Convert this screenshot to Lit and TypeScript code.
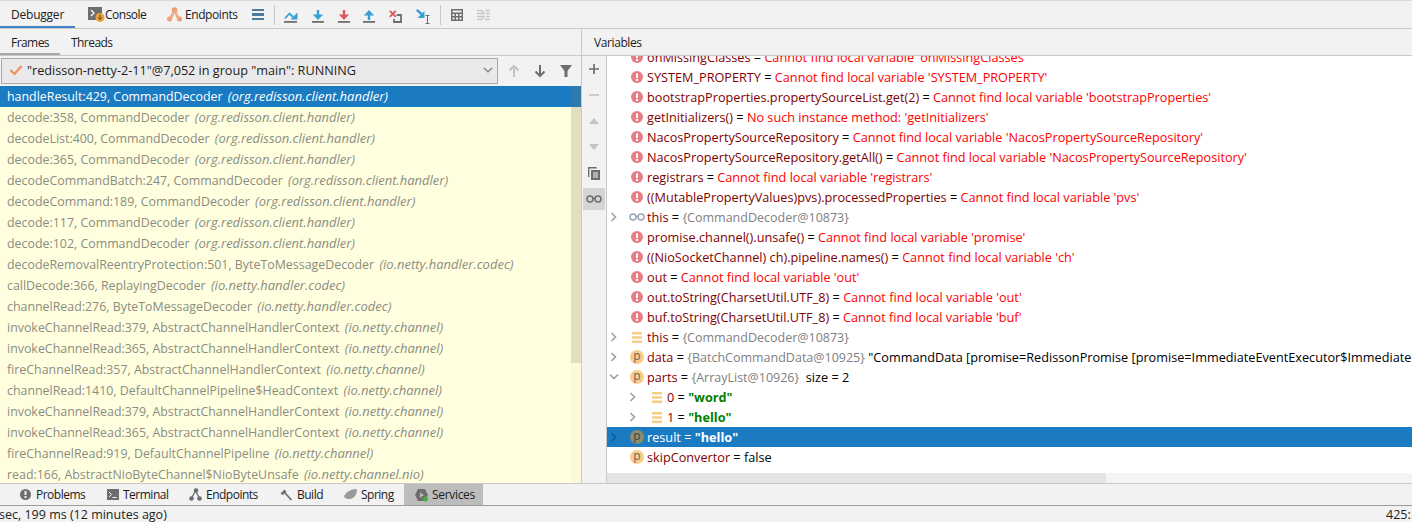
import { LitElement, html, css, svg } from "lit";
import { customElement } from "lit/decorators.js";

const frames: [string, string][] = [
  ["handleResult:429, CommandDecoder", "(org.redisson.client.handler)"],
  ["decode:358, CommandDecoder", "(org.redisson.client.handler)"],
  ["decodeList:400, CommandDecoder", "(org.redisson.client.handler)"],
  ["decode:365, CommandDecoder", "(org.redisson.client.handler)"],
  ["decodeCommandBatch:247, CommandDecoder", "(org.redisson.client.handler)"],
  ["decodeCommand:189, CommandDecoder", "(org.redisson.client.handler)"],
  ["decode:117, CommandDecoder", "(org.redisson.client.handler)"],
  ["decode:102, CommandDecoder", "(org.redisson.client.handler)"],
  ["decodeRemovalReentryProtection:501, ByteToMessageDecoder", "(io.netty.handler.codec)"],
  ["callDecode:366, ReplayingDecoder", "(io.netty.handler.codec)"],
  ["channelRead:276, ByteToMessageDecoder", "(io.netty.handler.codec)"],
  ["invokeChannelRead:379, AbstractChannelHandlerContext", "(io.netty.channel)"],
  ["invokeChannelRead:365, AbstractChannelHandlerContext", "(io.netty.channel)"],
  ["fireChannelRead:357, AbstractChannelHandlerContext", "(io.netty.channel)"],
  ["channelRead:1410, DefaultChannelPipeline$HeadContext", "(io.netty.channel)"],
  ["invokeChannelRead:379, AbstractChannelHandlerContext", "(io.netty.channel)"],
  ["invokeChannelRead:365, AbstractChannelHandlerContext", "(io.netty.channel)"],
  ["fireChannelRead:919, DefaultChannelPipeline", "(io.netty.channel)"],
  ["read:166, AbstractNioByteChannel$NioByteUnsafe", "(io.netty.channel.nio)"],
];

const errors: [string, string][] = [
  ["onMissingClasses", "Cannot find local variable 'onMissingClasses'"],
  ["SYSTEM_PROPERTY", "Cannot find local variable 'SYSTEM_PROPERTY'"],
  ["bootstrapProperties.propertySourceList.get(2)", "Cannot find local variable 'bootstrapProperties'"],
  ["getInitializers()", "No such instance method: 'getInitializers'"],
  ["NacosPropertySourceRepository", "Cannot find local variable 'NacosPropertySourceRepository'"],
  ["NacosPropertySourceRepository.getAll()", "Cannot find local variable 'NacosPropertySourceRepository'"],
  ["registrars", "Cannot find local variable 'registrars'"],
  ["((MutablePropertyValues)pvs).processedProperties", "Cannot find local variable 'pvs'"],
];
const errors2: [string, string][] = [
  ["promise.channel().unsafe()", "Cannot find local variable 'promise'"],
  ["((NioSocketChannel) ch).pipeline.names()", "Cannot find local variable 'ch'"],
  ["out", "Cannot find local variable 'out'"],
  ["out.toString(CharsetUtil.UTF_8)", "Cannot find local variable 'out'"],
  ["buf.toString(CharsetUtil.UTF_8)", "Cannot find local variable 'buf'"],
];

const ico = (w: number, h: number, body: unknown) =>
  html`<svg width=${w} height=${h} viewBox="0 0 ${w} ${h}" class="ico">${body}</svg>`;

const errIcon = ico(12, 12, svg`<circle cx="6" cy="6" r="6" fill="#e57f85"/><rect x="5" y="2.500" width="2" height="4.500" fill="#fff"/><rect x="5" y="8" width="2" height="2" fill="#fff"/>`);
const pIcon = (sel = false) => html`<span class="p ${sel ? "psel" : ""}">p</span>`;
const barsIcon = ico(10, 11, svg`<path d="M0 1.300h10M0 5.500h10M0 9.700h10" stroke="#f8cd85" stroke-width="2.600"/>`);
const glasses = (c: string) => ico(16, 12, svg`<circle cx="4" cy="6" r="3" fill="none" stroke="${c}" stroke-width="1.500"/><circle cx="12" cy="6" r="3" fill="none" stroke="${c}" stroke-width="1.500"/><path d="M7 5.500h2" stroke="${c}" stroke-width="1.300"/>`);
const chevR = (c = "#a0a0a0") => ico(8, 10, svg`<path d="M1.500 1l4 4-4 4" fill="none" stroke="${c}" stroke-width="1.600"/>`);
const chevD = ico(10, 8, svg`<path d="M1 1.500l4 4 4-4" fill="none" stroke="#a0a0a0" stroke-width="1.600"/>`);

const arrowBlue = "#389fd6";
const red = "#db5860";
const bar = svg`<rect x="0" y="11" width="12" height="1.800" fill="#6e6e6e"/>`;
const tools = {
  stepOver: ico(14, 13, svg`<path d="M.8 8.500L5.500 3.500L9 7" fill="none" stroke="${arrowBlue}" stroke-width="1.800"/><path d="M13.500 2.500V9.500H6.500z" fill="${arrowBlue}"/><rect x="0" y="11" width="13" height="1.800" fill="#6e6e6e"/>`),
  into: ico(12, 13, svg`<path d="M6 0v6" stroke="${arrowBlue}" stroke-width="2.400"/><path d="M.8 4.500h10.400L6 10z" fill="${arrowBlue}"/>${bar}`),
  force: ico(12, 13, svg`<path d="M6 0v6" stroke="${red}" stroke-width="2.400"/><path d="M.8 4.500h10.400L6 10z" fill="${red}"/>${bar}`),
  out: ico(12, 13, svg`<path d="M.8 5.500h10.400L6 0z" fill="${arrowBlue}"/><path d="M6 4v6" stroke="${arrowBlue}" stroke-width="2.400"/>${bar}`),
  drop: ico(13, 13, svg`<path d="M.8.800l6 6M6.800.800l-6 6" stroke="${red}" stroke-width="1.900"/><path d="M7.500 5h4.500v7H5V9" fill="none" stroke="#6e6e6e" stroke-width="1.800"/>`),
  cursor: ico(15, 15, svg`<path d="M.8.800L6 5.500" stroke="${arrowBlue}" stroke-width="2.400"/><path d="M8.500 2v7H1.500z" fill="${arrowBlue}"/><path d="M9.500 6.500h4M9.500 14.500h4M11.500 6.500v8" stroke="#6e6e6e" stroke-width="1"/>`),
  calc: ico(12, 12, svg`<path d="M0 0h12v12H0z" fill="#6e6e6e"/><path d="M1.500 1.500h9v2h-9zM1.500 5h2v2h-2zM5 5h2v2H5zM8.500 5h2v2h-2zM1.500 8.500h2v2h-2zM5 8.500h2v2H5zM8.500 8.500h2v2h-2z" fill="#f2f2f2"/>`),
  trace: ico(13, 12, svg`<path d="M0 1.500h5l2 3h-7M0 7.500h7l-2 3H0M13 1.500H8M13 4.500H9M13 7.500H9M13 10.500H8" fill="none" stroke="#c8c8c8" stroke-width="1.400"/>`),
};

@customElement("app-root")
export class AppRoot extends LitElement {
  static styles = css`
    :host { display: flex; flex-direction: column; width: 1412px; height: 522px; overflow: hidden; background: #f2f2f2;
      font: 12px "Open Sans", sans-serif; color: #1c1c1c; }
    .ico { display: block; flex: none; }
    .top { flex: none; border-top: 1px solid #d9d9d9; border-bottom: 1px solid #c9c9c9; box-sizing: border-box; height: 29px; display: flex; align-items: center; letter-spacing: -0.22px; }
    .tab { height: 100%; display: flex; align-items: center; gap: 1px; flex: none; }
    .tab.dbg { width: 75px; padding-left: 11px; box-sizing: border-box; box-shadow: inset 0 -2px 0 #4083c9; }
    .tab.con { margin-left: 13px; width: 79px; letter-spacing: -0.5px; gap: 0; }
    .tab.end { width: 85px; gap: 3px; letter-spacing: -0.42px; }
    .hb { display: flex; flex-direction: column; gap: 2px; width: 12px; }
    .hb i { height: 2.500px; background: #4c7c9c; display: block; }
    .sep { width: 1px; height: 20px; background: #c9c9c9; margin: 0 9.500px; flex: none; }
    .tools { display: flex; align-items: center; gap: 14px; }
    .tools.a { gap: 13.800px; padding-top: 3px; }
    .main { flex: 1; display: flex; min-height: 0; }
    .left { width: 581px; flex: none; display: flex; flex-direction: column; border-right: 1px solid #c9c9c9; }
    .subtabs { height: 27px; flex: none; display: flex; border-bottom: 1px solid #c9c9c9; box-sizing: border-box; align-items: center; letter-spacing: -0.55px; }
    .sub { height: 100%; display: flex; align-items: center; box-sizing: border-box; }
    .sub.on { width: 60px; padding-left: 11px; box-shadow: inset 0 -2px 0 #a8a8a8; }
    .sub.off { padding-left: 11px; }
    .combo-row { height: 30px; flex: none; display: flex; align-items: center; padding: 0 0 0 1px; }
    .combo { width: 497px; height: 26px; box-sizing: border-box; border: 1px solid #a9a9a9; background: #e9e9e9; display: flex; align-items: center; padding: 0 4px 2px 7px; gap: 3px; flex: none; font-size: 12.700px; }
    .combo .t { flex: 1; white-space: nowrap; padding-left: 1px; letter-spacing: -0.02px; }
    .nav { display: flex; align-items: center; padding-left: 9px; gap: 12px; }
    .list { position: relative; flex: 1; background: #ffffe0; overflow: hidden; min-height: 0; }
    .fr { height: 21px; line-height: 21px; padding-left: 7px; white-space: nowrap; color: #8c8c80; font-size: 12.400px; }
    .fr i { font-style: italic; margin-left: 2px; font-size: 13px; }
    .fr.sel { background: #1b7bc2; color: #fff; }
    .thumb { position: absolute; right: 0; top: 0; width: 10px; height: 277px; background: rgba(120,120,90,.2); }
    .track { position: absolute; right: 0; top: 0; width: 10px; bottom: 0; background: rgba(120,120,90,.04); }
    .right { flex: 1; display: flex; flex-direction: column; min-width: 0; }
    .vh { height: 27px; flex: none; border-bottom: 1px solid #c9c9c9; box-sizing: border-box; padding-left: 12px; display: flex; align-items: center; letter-spacing: -0.4px; }
    .vb { flex: 1; display: flex; min-height: 0; }
    .side { width: 24px; flex: none; border-right: 1px solid #c9c9c9; display: flex; flex-direction: column; align-items: center; }
    .sb { width: 22px; height: 26px; display: flex; align-items: center; justify-content: center; flex: none; }
    .sb.on { background: #d4d4d4; height: 22px; margin-top: 2px; }
    .vars { flex: 1; background: #fff; min-width: 0; display: flex; flex-direction: column; overflow: hidden; }
    .vlist { flex: 1; margin-top: -9px; }
    .v { height: 20px; display: flex; align-items: center; white-space: nowrap; font-size: 12.700px; }
    .v .ch { width: 26px; flex: none; display: flex; justify-content: center; padding-right: 12px; box-sizing: border-box; }
    .v .ic { width: 14px; flex: none; display: flex; margin-right: 2px; margin-left: -2px; }
    .v .ic.gl { width: 16px; margin-left: -4px; margin-right: 2px; }
    .v .ic.pi { width: 14px; margin-left: -3px; margin-right: 3px; }
    .v .ic.ba { width: 10px; margin-left: -1px; margin-right: 5px; }
    .v.ind .ch { width: 46px; padding-right: 0; justify-content: flex-start; padding-left: 22px; }
    .n { color: #7f0000; }
    .e { color: #f00; }
    .g { color: #808080; font-size: 12.500px; }
    .k { color: #000; }
    .s { color: #007f00; font-weight: 700; }
    .v.sel { background: #1b7bc2; color: #fff; }
    .v.sel .n, .v.sel .k, .v.sel .s { color: #fff; }
    .p { width: 14px; height: 14px; border-radius: 50%; background: #f9cd87; color: #666; font-size: 12px; line-height: 11px; text-align: center; display: block; flex: none; }
    .psel { background: #8c8c6c; color: #444; }
    .hs { height: 10px; flex: none; background: #f4f4f4; }
    .hs div { width: 499px; height: 100%; background: #e4e4e4; }
    .bot { height: 23px; flex: none; border-top: 1px solid #c9c9c9; border-bottom: 1px solid #9c9c9c; box-sizing: border-box; display: flex; align-items: center; padding-left: 20px; background: #f2f2f2; letter-spacing: -0.5px; }
    .bt { height: 100%; display: flex; align-items: center; gap: 5px; flex: none; }
    .bt.w1 { width: 87px; }
    .bt.w2 { width: 82px; gap: 4px; }
    .bt.w3 { width: 91px; gap: 4px; }
    .bt.w4 { width: 64px; gap: 4px; }
    .bt.w5 { width: 60px; gap: 4px; }
    .bt.on { background: #bdbdbd; width: 79px; box-sizing: border-box; padding-left: 11px; gap: 4px; letter-spacing: -0.32px; }
    .stat { flex: none; height: 16px; display: flex; align-items: center; white-space: nowrap; padding-top: 1px; box-sizing: border-box; }
    .stat .l { margin-left: -1px; font-size: 12.500px; }
    .stat .r { margin-left: auto; width: 26px; overflow: hidden; flex: none; font-size: 12.500px; }
  `;

  private errRow(r: [string, string]) {
    return html`<div class="v"><span class="ch"></span><span class="ic">${errIcon}</span><span class="n">${r[0]}</span><span class="k">&nbsp;=&nbsp;</span><span class="e">${r[1]}</span></div>`;
  }

  render() {
    return html`
      <div class="top">
        <div class="tab dbg">Debugger</div>
        <div class="tab con">${ico(17, 15, svg`<path d="M0 0h14v13H0z" fill="#6e6e6e"/><path d="M3 3l3 3-3 3" fill="none" stroke="#fff" stroke-width="1.300"/><circle cx="12" cy="10.500" r="4.500" fill="#eda53c"/><path d="M12 7.500v5M10 10.500l2 2 2-2" fill="none" stroke="#5c4010"/>`)}Console</div>
        <div class="tab end">${ico(15, 15, svg`<path d="M2.500 12L7.500 3l5 9" fill="none" stroke="#ee9f78" stroke-width="1.500"/><path d="M7 6l-3 7M8 6l3 7" stroke="#ee9f78"/><circle cx="2.500" cy="12" r="2.500" fill="#ee9f78"/><circle cx="7.500" cy="3" r="2.800" fill="#ee9f78"/><circle cx="12.500" cy="12" r="2.500" fill="#ee9f78"/>`)}Endpoints</div>
        <div class="hb"><i></i><i></i><i></i></div>
        <div class="sep"></div>
        <div class="tools a">${tools.stepOver}${tools.into}${tools.force}${tools.out}${tools.drop}${tools.cursor}</div>
        <div class="sep"></div>
        <div class="tools">${tools.calc}${tools.trace}</div>
      </div>
      <div class="main">
        <div class="left">
          <div class="subtabs"><div class="sub on">Frames</div><div class="sub off">Threads</div></div>
          <div class="combo-row">
            <div class="combo">
              ${ico(14, 12, svg`<path d="M1.500 6l4 4 7-8" fill="none" stroke="#ee8f5c" stroke-width="2.200"/>`)}
              <span class="t">"redisson-netty-2-11"@7,052 in group "main": RUNNING</span>
              ${ico(10, 8, svg`<path d="M1 2l4 4 4-4" fill="none" stroke="#777" stroke-width="1.200"/>`)}
            </div>
            <div class="nav">
              ${ico(14, 14, svg`<path d="M7 13V2M2.500 6.500L7 2l4.500 4.500" fill="none" stroke="#c4c4c4" stroke-width="2"/>`)}
              ${ico(14, 14, svg`<path d="M7 1v11M2.500 7.500L7 12l4.500-4.500" fill="none" stroke="#6e6e6e" stroke-width="2"/>`)}
              ${ico(14, 14, svg`<path d="M1 1h12L8.500 7v6h-3V7z" fill="#6e6e6e"/>`)}
            </div>
          </div>
          <div class="list">
            ${frames.map((f, i) => html`<div class="fr ${i === 0 ? "sel" : ""}">${f[0]} <i>${f[1]}</i></div>`)}
            <div class="track"></div>
            <div class="thumb"></div>
          </div>
        </div>
        <div class="right">
          <div class="vh">Variables</div>
          <div class="vb">
            <div class="side">
              <div class="sb">${ico(12, 12, svg`<path d="M6 1v10M1 6h10" stroke="#6e6e6e" stroke-width="1.700"/>`)}</div>
              <div class="sb">${ico(12, 12, svg`<path d="M1 6h10" stroke="#c4c4c4" stroke-width="1.700"/>`)}</div>
              <div class="sb">${ico(12, 8, svg`<path d="M1 7l5-6 5 6z" fill="#c4c4c4"/>`)}</div>
              <div class="sb">${ico(12, 8, svg`<path d="M1 1l5 6 5-6z" fill="#c4c4c4"/>`)}</div>
              <div class="sb">${ico(12, 13, svg`<path d="M.7 10V.7h8" fill="none" stroke="#6e6e6e" stroke-width="1.400"/><path d="M3 3h9v10H3z" fill="#6e6e6e"/><path d="M5 6h5M5 8h5M5 10h5" stroke="#f2f2f2"/>`)}</div>
              <div class="sb on">${glasses("#6e6e6e")}</div>
            </div>
            <div class="vars">
              <div class="vlist">
                ${errors.map((r) => this.errRow(r))}
                <div class="v"><span class="ch">${chevR()}</span><span class="ic gl">${glasses("#9aa7b5")}</span><span class="n">this</span><span class="k">&nbsp;=&nbsp;</span><span class="g">{CommandDecoder@10873}</span></div>
                ${errors2.map((r) => this.errRow(r))}
                <div class="v"><span class="ch">${chevR()}</span><span class="ic ba">${barsIcon}</span><span class="n">this</span><span class="k">&nbsp;=&nbsp;</span><span class="g">{CommandDecoder@10873}</span></div>
                <div class="v"><span class="ch">${chevR()}</span><span class="ic pi">${pIcon()}</span><span class="n">data</span><span class="k">&nbsp;=&nbsp;</span><span class="g">{BatchCommandData@10925}</span><span class="k">&nbsp;"CommandData [promise=RedissonPromise [promise=ImmediateEventExecutor$ImmediatePromise@1a2b3c]]"</span></div>
                <div class="v"><span class="ch">${chevD}</span><span class="ic pi">${pIcon()}</span><span class="n">parts</span><span class="k">&nbsp;=&nbsp;</span><span class="g">{ArrayList@10926}</span><span class="k">&nbsp; size = 2</span></div>
                <div class="v ind"><span class="ch">${chevR()}</span><span class="ic ba">${barsIcon}</span><span class="n">0</span><span class="k">&nbsp;=&nbsp;</span><span class="s">"word"</span></div>
                <div class="v ind"><span class="ch">${chevR()}</span><span class="ic ba">${barsIcon}</span><span class="n">1</span><span class="k">&nbsp;=&nbsp;</span><span class="s">"hello"</span></div>
                <div class="v sel"><span class="ch">${chevR("#0d5a94")}</span><span class="ic pi">${pIcon(true)}</span><span class="n">result</span><span class="k">&nbsp;=&nbsp;</span><span class="s">"hello"</span></div>
                <div class="v"><span class="ch"></span><span class="ic pi">${pIcon()}</span><span class="n">skipConvertor</span><span class="k">&nbsp;= false</span></div>
              </div>
              <div class="hs"><div></div></div>
            </div>
          </div>
        </div>
      </div>
      <div class="bot">
        <div class="bt w1">${ico(11, 11, svg`<circle cx="5.500" cy="5.500" r="5.500" fill="#6e6e6e"/><rect x="4.500" y="2" width="2" height="4" fill="#f2f2f2"/><rect x="4.500" y="7" width="2" height="2" fill="#f2f2f2"/>`)}Problems</div>
        <div class="bt w2">${ico(12, 11, svg`<path d="M0 0h12v11H0z" fill="#6e6e6e"/><path d="M2 3l2.500 2.500L2 8M5.500 8.500h4" fill="none" stroke="#f2f2f2"/>`)}Terminal</div>
        <div class="bt w3">${ico(13, 13, svg`<path d="M2.500 10L6.500 3l4 7" fill="none" stroke="#6e6e6e" stroke-width="1.300"/><circle cx="2.500" cy="10.500" r="2.300" fill="#6e6e6e"/><circle cx="7" cy="2.500" r="2.300" fill="#6e6e6e"/><circle cx="10.500" cy="10.500" r="2.300" fill="#6e6e6e"/>`)}Endpoints</div>
        <div class="bt w4">${ico(13, 12, svg`<path d="M.5 4.500L4.500.5l2 2L3 6z" fill="#6e6e6e"/><path d="M5 4l6.500 7" stroke="#6e6e6e" stroke-width="1.800"/>`)}Build</div>
        <div class="bt w5">${ico(13, 11, svg`<path d="M0 8C1 3 7 0 13 0c0 6-3 10-8 10-2 0-3-.5-5-2z" fill="#9a9a9a"/>`)}Spring</div>
        <div class="bt on">${ico(13, 14, svg`<path d="M3 1h7l3 6-3 6H3L0 7z" fill="#6e6e6e"/><path d="M5 4.500l4 2.500-4 2.500z" fill="#bdbdbd"/><circle cx="10.500" cy="11" r="2.500" fill="#3bb53b"/>`)}Services</div>
      </div>
      <div class="stat"><span class="l">sec, 199 ms (12 minutes ago)</span><span class="r">425:1</span></div>
    `;
  }
}
